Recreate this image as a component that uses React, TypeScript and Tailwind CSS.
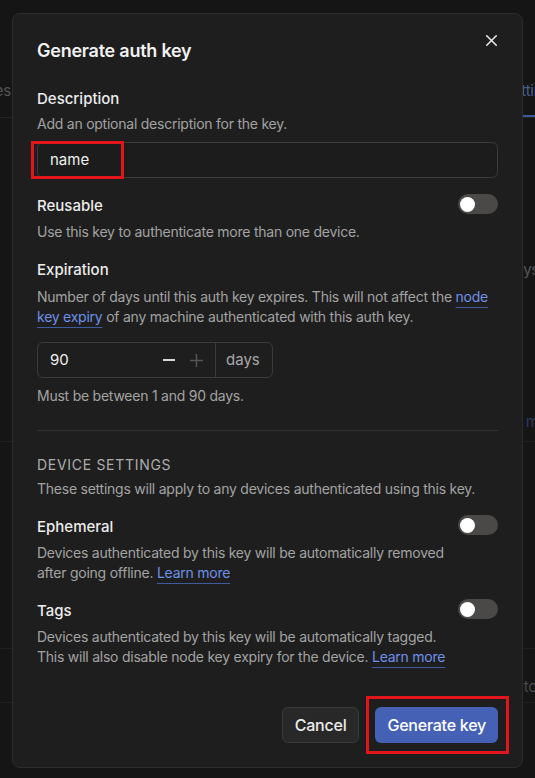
import { X } from 'lucide-react';

function Toggle() {
    return (
        <div className="flex h-5 w-10 shrink-0 items-center rounded-full bg-[#4a4947] px-[2px]">
            <div className="h-[15px] w-[15px] rounded-full bg-white" />
        </div>
    );
}

function Link({ children }: { children: React.ReactNode }) {
    return (
        <a className="text-[#6f90e9] underline decoration-[#3f5b9e] underline-offset-[5px]">{children}</a>
    );
}

function ToggleRow({ label, lines }: { label: string; lines: React.ReactNode[] }) {
    return (
        <div className="mt-[18px] flex items-start gap-4">
            <div className="min-w-0 flex-1">
                <p className="text-[15px] font-medium leading-5 tracking-normal text-[#ececec]">{label}</p>
                <p className="mt-[6px] text-sm leading-5 text-[#a3a3a3]">
                    {lines.map((l, i) => (
                        <span key={i} className="block whitespace-nowrap">{l}</span>
                    ))}
                </p>
            </div>
            <div className="-mt-[2px]">
                <Toggle />
            </div>
        </div>
    );
}

export default function App() {
    return (
        <div className="relative h-[778px] w-[535px] overflow-hidden bg-[#151515] font-['Inter','Noto_Sans',sans-serif] tracking-[-0.015em]">
            {/* page behind the dialog */}
            <div className="flex flex-col text-[15px] text-[#555555]">
                <div className="flex h-[118px] items-end justify-between border-b border-[#242424]">
                    <span className="-ml-[44px] pb-[16px] leading-5">Devices</span>
                    <span className="-mr-[24px] border-b-2 border-[#3d5a9a] pb-[14px] leading-5 text-[#48608f]">Settings</span>
                </div>
                <div className="flex justify-end pt-[142px]">
                    <span className="-mr-[4px] leading-5">Auth keys</span>
                </div>
                <div className="mt-[132px] flex justify-end border-b border-[#202020] pb-[9px]">
                    <span className="-mr-[26px] leading-5 text-[#2a3a5c]">more</span>
                </div>
                <div className="mt-[206px] border-b border-[#202020]" />
                <div className="flex justify-end border-b border-[#202020] pb-[5px] pt-[28px]">
                    <span className="-mr-[2px] leading-5 text-[#4a4a4a]">Auto</span>
                </div>
            </div>

            {/* dialog */}
            <div className="absolute left-3 top-[13px] w-[511px] rounded-lg border border-[#2c2c2c] bg-[#1e1e1e] px-6 pb-6 pt-[23px] text-[#ececec]">
                <div className="flex items-start justify-between">
                    <h2 className="text-lg font-semibold leading-7 text-[#f2f2f2]">Generate auth key</h2>
                    <X className="-mr-[3px] -mt-[6px] h-[19px] w-[19px] text-[#e6e6e6]" strokeWidth={2} />
                </div>

                <p className="mt-6 text-[15px] font-medium leading-5 tracking-normal">Description</p>
                <p className="mt-[5px] text-sm leading-5 text-[#a3a3a3]">Add an optional description for the key.</p>
                <div className="mt-2 flex h-9 items-center rounded-md border border-[#3a3a3a] bg-[#1c1c1c] px-3 text-[15px] tracking-normal text-[#f0f0f0]">
                    name
                </div>

                <ToggleRow label="Reusable" lines={['Use this key to authenticate more than one device.']} />

                <p className="mt-[18px] text-[15px] font-medium leading-5 tracking-normal">Expiration</p>
                <p className="mt-[7px] text-sm leading-5 text-[#a3a3a3]">
                    Number of days until this auth key expires. This will not affect the <Link>node key expiry</Link> of any machine authenticated with this auth key.
                </p>
                <div className="mt-[15px] flex h-9 w-[236px] rounded-md border border-[#3a3a3a] text-[15px] tracking-normal">
                    <div className="flex w-[177px] items-center pl-3">
                        <span className="flex-1 text-[#f0f0f0]">90</span>
                        <svg width="12" height="12" viewBox="0 0 12 12" className="text-[#d8d8d8]">
                            <path d="M0 6h12" stroke="currentColor" strokeWidth="2" />
                        </svg>
                        <svg width="13" height="13" viewBox="0 0 13 13" className="ml-[15px] mr-[12px] text-[#555555]">
                            <path d="M0 6.5h13M6.5 0v13" stroke="currentColor" strokeWidth="1.5" />
                        </svg>
                    </div>
                    <div className="flex flex-1 items-center border-l border-[#3a3a3a] pl-[10px] text-[#a8a8a8]">days</div>
                </div>
                <p className="mt-2 text-sm leading-5 text-[#a3a3a3]">Must be between 1 and 90 days.</p>

                <div className="mt-6 h-px bg-[#303030]" />

                <p className="mt-6 text-sm uppercase leading-5 tracking-[0.05em] text-[#adadad]">Device settings</p>
                <p className="mt-1 text-sm leading-5 text-[#a3a3a3]">These settings will apply to any devices authenticated using this key.</p>

                <ToggleRow
                    label="Ephemeral"
                    lines={[
                        'Devices authenticated by this key will be automatically removed',
                        <>after going offline. <Link>Learn more</Link></>,
                    ]}
                />
                <ToggleRow
                    label="Tags"
                    lines={[
                        'Devices authenticated by this key will be automatically tagged.',
                        <>This will also disable node key expiry for the device. <Link>Learn more</Link></>,
                    ]}
                />

                <div className="mt-10 flex justify-end gap-4">
                    <button className="h-9 rounded-md border border-[#3a3a3a] bg-[#282828] px-3 text-base font-medium text-[#ececec]">Cancel</button>
                    <button className="h-9 rounded-md bg-[#4561b6] px-3 text-base font-medium text-white">Generate key</button>
                </div>
            </div>

            {/* annotation boxes */}
            <div className="absolute left-[31px] top-[141px] h-[38px] w-[93px] border-[3px] border-[#e3141c]" />
            <div className="absolute left-[366px] top-[696px] h-[58px] w-[143px] border-[3px] border-[#e3141c]" />
        </div>
    );
}
